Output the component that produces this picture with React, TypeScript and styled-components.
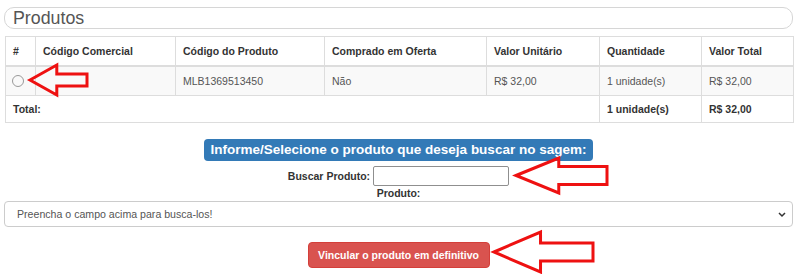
import React from 'react';
import styled, { createGlobalStyle } from 'styled-components';

const GlobalStyle = createGlobalStyle`
	html, body {
		margin: 0;
		padding: 0;
		background: #fff;
	}
	body {
		font-family: 'Liberation Sans', Arial, sans-serif;
		font-size: 10.5px;
		color: #333;
	}
`;

const Page = styled.div`
	position: relative;
	width: 800px;
	height: 274px;
	padding: 7px 7px 0 4px;
	box-sizing: border-box;
	overflow: hidden;
`;

const TitleBox = styled.div`
	height: 22px;
	box-sizing: border-box;
	border: 1px solid #d6d6d6;
	border-radius: 10px;
	padding: 0 8px;
	font-size: 17.8px;
	line-height: 20px;
	color: #555;
	margin-bottom: 7px;
`;

const Table = styled.table`
	width: 788px;
	margin-left: 1px;
	border-collapse: collapse;
	table-layout: fixed;
	font-size: 10.5px;
`;

const Th = styled.th`
	text-align: left;
	font-weight: bold;
	color: #333;
	height: 28px;
	padding: 0 7px;
	border: 1px solid #ddd;
	border-bottom-width: 2px;
`;

const Row = styled.tr<{ $striped?: boolean }>`
	background: ${(p) => (p.$striped ? '#f9f9f9' : '#fff')};
`;

const Td = styled.td<{ $bold?: boolean; $h?: number }>`
	height: ${(p) => p.$h ?? 28}px;
	padding: 0 7px;
	border: 1px solid #ddd;
	color: ${(p) => (p.$bold ? '#333' : '#555')};
	font-weight: ${(p) => (p.$bold ? 'bold' : 'normal')};
	white-space: nowrap;
`;

const Radio = styled.span`
	display: inline-block;
	width: 10px;
	height: 10px;
	border: 1px solid #999;
	border-radius: 50%;
	vertical-align: middle;
	margin-left: -1px;
	margin-top: -2px;
`;

const Search = styled.div`
	display: flex;
	flex-direction: column;
	align-items: center;
	margin-top: 16px;
`;

const Badge = styled.div`
	background: #337ab7;
	color: #fff;
	font-weight: bold;
	font-size: 13.5px;
	line-height: 22px;
	height: 22px;
	padding: 0 7px;
	border-radius: 4px;
	white-space: nowrap;
`;

const FieldRow = styled.div`
	display: flex;
	align-items: center;
	gap: 3px;
	margin-top: 5px;
	height: 20px;
`;

const Label = styled.label`
	font-weight: bold;
	font-size: 10.5px;
	color: #333;
`;

const TextInput = styled.input`
	width: 136px;
	height: 20px;
	box-sizing: border-box;
	border: 1px solid #8f8f8f;
	border-radius: 2px;
	margin: 0;
	padding: 0 3px;
	font-family: inherit;
	font-size: 10.5px;
`;

const SmallLabel = styled(Label)`
	line-height: 13px;
	margin-top: 1px;
`;

const SelectWrap = styled.div`
	position: relative;
	margin-top: 1px;
	height: 26px;
	box-sizing: border-box;
	border: 1px solid #ccc;
	border-radius: 4px;
	display: flex;
	align-items: center;
	padding: 0 12px;
	color: #555;
	font-size: 10.6px;
`;

const Chevron = styled.svg`
	position: absolute;
	right: 6px;
	top: 10px;
`;

const ButtonRow = styled.div`
	display: flex;
	justify-content: center;
	margin-top: 15px;
`;

const DangerButton = styled.button`
	background: #d9534f;
	color: #fff;
	border: 1px solid #d43f3a;
	border-radius: 4px;
	height: 26px;
	width: 182px;
	font-family: inherit;
	font-weight: bold;
	font-size: 10.5px;
	padding: 0;
	white-space: nowrap;
`;

const Arrow = styled.svg`
	position: absolute;
	overflow: visible;
	pointer-events: none;
`;

function RedArrow({ x, y, w, h, shaft }: { x: number; y: number; w: number; h: number; shaft: number }) {
	// arrow pointing left, head takes about half the width
	const hx = w * 0.47;
	const top = (h - shaft) / 2;
	const pts = [
		[0, h / 2],
		[hx, 0],
		[hx, top],
		[w, top],
		[w, top + shaft],
		[hx, top + shaft],
		[hx, h],
	]
		.map((p) => p.join(','))
		.join(' ');
	return (
		<Arrow style={{ left: x, top: y }} width={w} height={h}>
			<polygon points={pts} fill="none" stroke="#ee1111" strokeWidth={3} strokeLinejoin="miter" />
		</Arrow>
	);
}

export default function App() {
	return (
		<>
			<GlobalStyle />
			<Page>
				<TitleBox>Produtos</TitleBox>
				<Table>
					<colgroup>
						<col style={{ width: 30 }} />
						<col style={{ width: 140 }} />
						<col style={{ width: 149 }} />
						<col style={{ width: 162 }} />
						<col style={{ width: 113 }} />
						<col style={{ width: 102 }} />
						<col style={{ width: 92 }} />
					</colgroup>
					<thead>
						<tr>
							<Th>#</Th>
							<Th>Código Comercial</Th>
							<Th>Código do Produto</Th>
							<Th>Comprado em Oferta</Th>
							<Th>Valor Unitário</Th>
							<Th>Quantidade</Th>
							<Th>Valor Total</Th>
						</tr>
					</thead>
					<tbody>
						<Row $striped>
							<Td>
								<Radio />
							</Td>
							<Td></Td>
							<Td>MLB1369513450</Td>
							<Td>Não</Td>
							<Td>R$ 32,00</Td>
							<Td>1 unidade(s)</Td>
							<Td>R$ 32,00</Td>
						</Row>
						<Row>
							<Td $bold $h={26} colSpan={5}>
								Total:
							</Td>
							<Td $bold $h={26}>1 unidade(s)</Td>
							<Td $bold $h={26}>R$ 32,00</Td>
						</Row>
					</tbody>
				</Table>
				<Search>
					<Badge>Informe/Selecione o produto que deseja buscar no sagem:</Badge>
					<FieldRow>
						<Label htmlFor="busca">Buscar Produto:</Label>
						<TextInput id="busca" type="text" />
					</FieldRow>
					<SmallLabel>Produto:</SmallLabel>
				</Search>
				<SelectWrap>
					Preencha o campo acima para busca-los!
					<Chevron width="8" height="6" viewBox="0 0 8 6">
						<path d="M1 1 L4 4 L7 1" fill="none" stroke="#333" strokeWidth="1.5" />
					</Chevron>
				</SelectWrap>
				<ButtonRow>
					<DangerButton>Vincular o produto em definitivo</DangerButton>
				</ButtonRow>
				<RedArrow x={30} y={65} w={57} h={30} shaft={12} />
				<RedArrow x={516} y={158} w={91} h={35} shaft={18} />
				<RedArrow x={494} y={232} w={99} h={40} shaft={18} />
			</Page>
		</>
	);
}
